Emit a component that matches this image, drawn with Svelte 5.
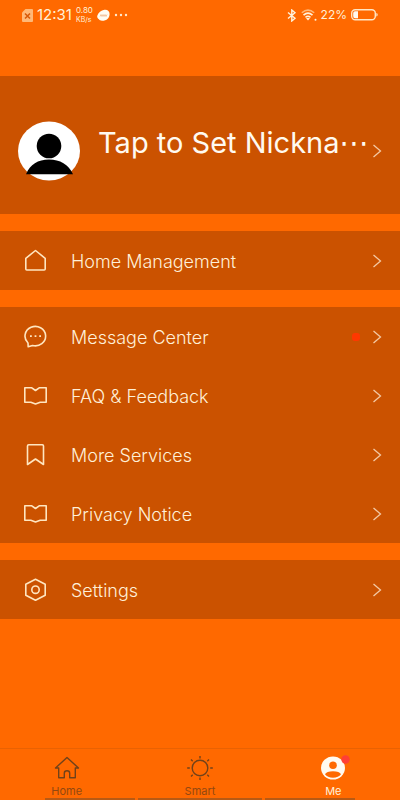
<script>
	const groups = [
		[{ label: "Home Management", icon: "home" }],
		[
			{ label: "Message Center", icon: "message", unread: true },
			{ label: "FAQ & Feedback", icon: "book" },
			{ label: "More Services", icon: "bookmark" },
			{ label: "Privacy Notice", icon: "book" },
		],
		[{ label: "Settings", icon: "settings" }],
	];

	const tabs = [
		{ label: "Home", icon: "house" },
		{ label: "Smart", icon: "sun" },
		{ label: "Me", icon: "me" },
	];

	let activeTab = $state("Me");
</script>

{#snippet chevron()}
	<svg class="chevron" viewBox="0 0 10 14" aria-hidden="true">
		<path d="M1.500 1l7 6-7 6" />
	</svg>
{/snippet}

<div class="page">
	<header class="status">
		<div class="status-side">
			<svg width="11" height="13" viewBox="0 0 11 13" aria-hidden="true">
				<path d="M3.500 0H10q1 0 1 1v11q0 1-1 1H1q-1 0-1-1V3.500z" fill="#ffb877" />
				<path d="M3 4.500l5 5M8 4.500l-5 5" stroke="#d85a08" stroke-width="1.600" />
			</svg>
			<span class="clock">12:31</span>
			<span class="speed">
				<span class="value">0.80</span>
				<span>KB/s</span>
			</span>
			<svg width="13" height="13" viewBox="0 0 13 13" aria-hidden="true">
				<path
					d="M7.500.7C11 .3 13 2.700 12.500 6c-.5 4-4 6-7.500 5.700-1.500-.1-2.500-.5-3-1.500C.5 9.500-.2 8 .4 6.500 1.300 3.500 4 1.200 7.500.7z"
					fill="#fffdf2"
				/>
				<path d="M3 7.500l1-2 1 2 1-2 1 2 1-2 1 2 1-2" stroke="#f0b98a" stroke-width=".8" fill="none" />
			</svg>
			<svg width="14" height="4" viewBox="0 0 14 4" fill="#ffe9cc" aria-hidden="true">
				<circle cx="2" cy="2" r="1.200" />
				<circle cx="7" cy="2" r="1.200" />
				<circle cx="12" cy="2" r="1.200" />
			</svg>
		</div>
		<div class="status-side">
			<svg width="10" height="13" viewBox="0 0 10 13" fill="none" stroke="#fff3dc" stroke-width="1.400" aria-hidden="true">
				<path d="M1 3.500l7 5.700L4.800 12V1L8 3.800 1 9.500" />
			</svg>
			<svg width="16" height="12" viewBox="0 0 16 12" fill="none" aria-hidden="true">
				<path d="M.8 3.700Q7 -1.500 13.200 3.700" stroke="#ffb877" stroke-width="1.500" />
				<path d="M2.500 6.200q4.500-4 9 0M4.500 8.300q2.500-2 5 0" stroke="#fff3dc" stroke-width="1.600" />
				<path d="M5 9.300q2-1.300 4 0L7 11.600z" fill="#fff3dc" />
				<circle cx="14.500" cy="10.700" r="1" fill="#fff3dc" />
			</svg>
			<span class="percent">22%</span>
			<svg width="27" height="12" viewBox="0 0 27 12" aria-hidden="true">
				<rect x=".7" y=".7" width="23.600" height="10" rx="3.500" fill="none" stroke="#ffe6c4" stroke-width="1.400" />
				<path d="M4 2.200h3v7H4q-1.800 0-1.800-2V4.200q0-2 1.800-2z" fill="#fffaf0" />
				<path d="M25.300 4q1.400 0 1.400 1.700t-1.400 1.700z" fill="#ffe6c4" />
			</svg>
		</div>
	</header>

	<main>
		<button type="button" class="profile">
			<svg class="avatar" viewBox="0 0 62 60" aria-hidden="true">
				<ellipse cx="31" cy="30" rx="31" ry="29.500" fill="#fff" />
				<circle cx="31" cy="25" r="12.300" fill="#000" />
				<path d="M8 53.200C12 43.500 20 38.500 31 38.500s19.500 5 24 14.700z" fill="#000" />
			</svg>
			<span class="nickname">Tap to Set Nickna<span class="dots">⋯</span></span>
			{@render chevron()}
		</button>

		{#each groups as group}
			<section class="group">
				{#each group as item}
					<button type="button" class="row">
						<svg class="row-icon" viewBox="0 0 24 24" aria-hidden="true">
							{#if item.icon === "home"}
								<path d="M2.800 9.300L12.500 1.500l9.700 7.800V20q0 1-1 1H3.800q-1 0-1-1z" />
							{:else if item.icon === "message"}
								<path d="M5 18A10.300 9.700 0 1 1 9.500 20.500l-4.300 1.300z" />
								<path class="solid" d="M7 10.300h1.800v1.800H7zM11.600 10.300h1.800v1.800h-1.800zM16.200 10.300h1.800v1.800h-1.800z" />
							{:else if item.icon === "book"}
								<path d="M1.800 3.800h7l3.700 2.700 3.700-2.700h7v14.500h-6L12.500 20l-4.700-1.700h-6z" />
							{:else if item.icon === "bookmark"}
								<path d="M4.500 3q0-1.200 1.200-1.200h13.600q1.200 0 1.200 1.200v18.500l-8-5.500-8 5.500z" />
							{:else}
								<path d="M12.500 1.200l9.700 5v11l-9.700 5-9.700-5v-11z" />
								<circle cx="12.500" cy="11.700" r="3.700" />
							{/if}
						</svg>
						<span class="row-label">{item.label}</span>
						{#if item.unread}
							<span class="unread"></span>
						{/if}
						{@render chevron()}
					</button>
				{/each}
			</section>
		{/each}
	</main>

	<nav class="tabbar">
		<div class="tabs">
			{#each tabs as tab}
				<button
					type="button"
					class="tab"
					class:active={activeTab === tab.label}
					onclick={() => (activeTab = tab.label)}
				>
					<svg class="tab-icon" viewBox="0 0 28 26" aria-hidden="true">
						{#if tab.icon === "house"}
							<path d="M14 2.500L2.500 13H5.700v9.800h5.600v-4.500q0-2.500 2.700-2.500t2.700 2.500v4.500h5.600V13h3.200z" />
						{:else if tab.icon === "sun"}
							<circle cx="14" cy="13" r="7.800" />
							<path
								d="M14 1v2.500M14 22.500V25M1.200 13h2.600M24.200 13h2.600M5 4.500l1.700 1.700M21.300 19.800l1.700 1.700M23 4.500l-1.700 1.700M6.700 19.800L5 21.500"
							/>
						{:else}
							<ellipse class="disc" cx="14" cy="13" rx="12" ry="11.500" />
							<circle class="face" cx="14" cy="10.300" r="3.800" />
							<path class="face" d="M6 19.300q1.500-3.100 8-3.100t8 3.100q-2.500 3.400-8 3.400t-8-3.400z" />
							<circle class="alert" cx="26.500" cy="4.500" r="4.200" />
						{/if}
					</svg>
					<span>{tab.label}</span>
				</button>
			{/each}
		</div>
		<div class="nav-hint"><i></i><i class="wide"></i><i></i></div>
	</nav>
</div>

<style>
	:global(body) {
		margin: 0;
		background: #ff6900;
	}

	.page {
		display: flex;
		flex-direction: column;
		min-height: 100vh;
		background: #ff6900;
		color: #fff0d8;
		font-family: Inter, "Noto Sans", sans-serif;
	}

	button {
		margin: 0;
		padding: 0;
		border: 0;
		background: none;
		color: inherit;
		font: inherit;
		text-align: left;
		cursor: pointer;
	}

	.status {
		display: flex;
		justify-content: space-between;
		align-items: center;
		height: 30px;
		padding: 0 22px;
	}
	.status-side {
		display: flex;
		align-items: center;
		gap: 4px;
	}
	.clock {
		font-size: 15px;
		line-height: 16px;
	}
	.speed {
		display: flex;
		flex-direction: column;
		font-size: 7px;
		line-height: 9px;
	}
	.value {
		font-size: 8px;
	}
	.percent {
		font-size: 12px;
		line-height: 16px;
	}

	main {
		display: flex;
		flex: 1;
		flex-direction: column;
		gap: 17px;
		padding: 46px 0 17px;
	}

	.profile {
		display: flex;
		align-items: center;
		height: 138px;
		padding: 12px 18px 0;
		box-sizing: border-box;
		background: #cb5200;
	}
	.avatar {
		flex: none;
		width: 62px;
		height: 60px;
	}
	.nickname {
		flex: 1;
		min-width: 0;
		padding: 0 0 16px 18px;
		color: #fffaf0;
		font-size: 29px;
		line-height: 36px;
		white-space: nowrap;
	}
	.dots {
		font-family: "DejaVu Sans", sans-serif;
		line-height: 29px;
	}

	.group {
		display: flex;
		flex-direction: column;
		background: #cb5200;
	}
	.row {
		display: flex;
		align-items: center;
		height: 59px;
		padding: 0 18px 0 23px;
	}
	.row-icon {
		flex: none;
		width: 24px;
		height: 24px;
		fill: none;
		stroke: #ffe6c0;
		stroke-width: 1.6;
		stroke-linejoin: round;
	}
	.solid {
		fill: #ffe6c0;
		stroke: none;
	}
	.row-label {
		flex: 1;
		padding: 2px 0 0 24px;
		font-size: 18px;
		font-weight: 300;
		line-height: 24px;
	}
	.unread {
		width: 8px;
		height: 8px;
		margin-right: 12px;
		border-radius: 3px;
		background: #ff3800;
	}
	.chevron {
		flex: none;
		width: 10px;
		height: 14px;
		fill: none;
		stroke: #f3c9a4;
		stroke-width: 1.3;
	}

	.tabbar {
		border-top: 1px solid #e96203;
	}
	.tabs {
		display: flex;
		padding-top: 6px;
	}
	.tab {
		display: flex;
		flex: 1;
		flex-direction: column;
		align-items: center;
		gap: 4px;
		color: #934810;
		font-size: 11px;
		line-height: 13px;
	}
	.tab.active {
		color: #fff0d8;
	}
	.tab-icon {
		width: 28px;
		height: 26px;
		overflow: visible;
		fill: none;
		stroke: #70421a;
		stroke-width: 1.4;
		stroke-linejoin: round;
	}
	.disc {
		fill: #fffaf0;
		stroke: none;
	}
	.face {
		fill: #ff6900;
		stroke: none;
	}
	.alert {
		fill: #ff3f35;
		stroke: none;
	}

	.nav-hint {
		display: flex;
		gap: 3px;
		height: 2px;
		padding: 0 45px;
	}
	.nav-hint i {
		flex: 90;
		background: #b85a14;
	}
	.nav-hint .wide {
		flex: 124;
	}
</style>
